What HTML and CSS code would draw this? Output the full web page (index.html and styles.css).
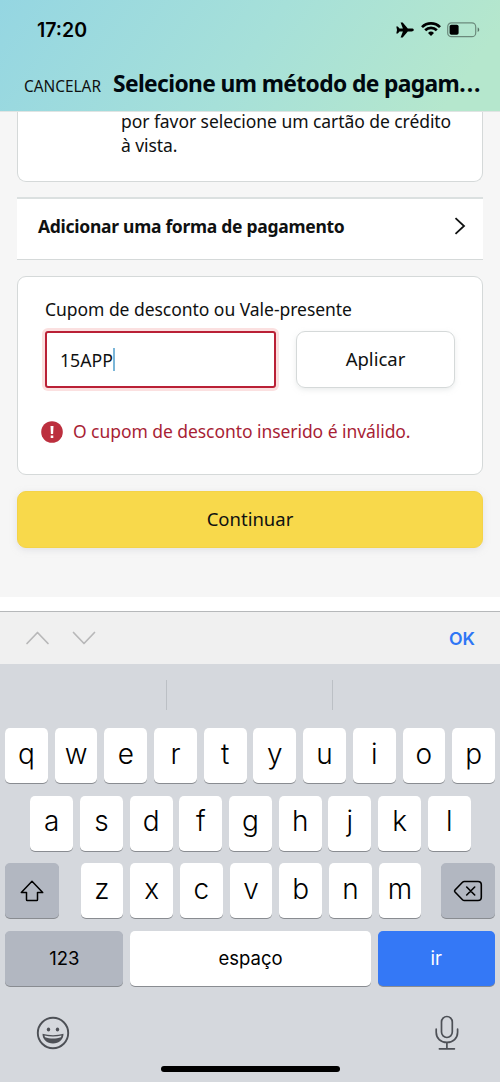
FILE: index.html
```html
<!DOCTYPE html>
<html lang="pt-BR">
<head>
<meta charset="utf-8">
<title>Selecione um método de pagamento</title>
<link rel="stylesheet" href="styles.css">
</head>
<body>
<div class="screen">
  <header class="header">
    <div class="status">
      <span class="clock">17:20</span>
      <div class="status-icons">
        <svg width="18" height="16" viewBox="0 0 18 16"><path d="M17.800 8c0-.9-1-1.400-2.200-1.400h-3.800L6.700.4H4.600l2.300 6.200H3.500L1.800 4.600H.3L1 8 .3 11.400h1.500l1.700-2h3.400L4.600 15.600h2.100l5.100-6.200h3.800c1.200 0 2.200-.5 2.200-1.400z"/></svg>
        <svg class="wifi" width="20" height="14" viewBox="0 0 20 14"><g fill="none" stroke="#000" stroke-width="2.700"><path d="M1 5.100a12.700 12.700 0 0 1 18 0"/><path d="M4.200 8.300a8.200 8.200 0 0 1 11.600 0"/></g><path d="M10 14l-3-3a4.300 4.300 0 0 1 6 0z"/></svg>
        <svg class="battery" width="33" height="16" viewBox="0 0 33 16"><rect x=".7" y=".9" width="28" height="13.800" rx="3.800" fill="none" stroke="#000" stroke-opacity=".4" stroke-width="1.200"/><rect x="2.600" y="2.800" width="9" height="10" rx="1.800"/><path d="M30.700 5.600c2 .7 2 3.700 0 4.400z" opacity=".5"/></svg>
      </div>
    </div>
    <div class="nav">
      <span class="cancel">CANCELAR</span>
      <h1 class="title">Selecione um método de pagam<span class="dots">...</span></h1>
    </div>
  </header>
  <main class="content">
    <section class="card notice"><p class="notice-text">por favor selecione um cartão de crédito<br>à vista.</p></section>
    <section class="add-row">
      <span class="add-label">Adicionar uma forma de pagamento</span>
      <svg width="12" height="18" viewBox="0 0 12 18"><path d="M1.500 1.200L10 9l-8.500 7.800" fill="none" stroke="#0f1111" stroke-width="1.800"/></svg>
    </section>
    <section class="card coupon">
      <div class="coupon-label">Cupom de desconto ou Vale-presente</div>
      <div class="coupon-form">
        <div class="field"><span>15APP</span><span class="caret"></span></div>
        <div class="apply">Aplicar</div>
      </div>
      <div class="error">
        <svg width="22" height="22" viewBox="0 0 22 22"><circle cx="11" cy="11" r="10.800" fill="#bc2f3e"/><path d="M9.500 5h3l-.4 8h-2.200zM9.700 14.600h2.600V17H9.700z" fill="#fff"/></svg>
        <span class="error-text">O cupom de desconto inserido é inválido.</span>
      </div>
    </section>
    <div class="continue">Continuar</div>
  </main>
  <div class="toolbar">
    <svg width="72" height="16" viewBox="0 0 72 16"><path d="M2 13.500L12.500 2.500l10.500 11M48.500 2.500l10.500 11L69.500 2.500" fill="none" stroke="#b8b8b9" stroke-width="1.700" stroke-linecap="round" stroke-linejoin="round"/></svg>
    <span class="ok">OK</span>
  </div>
  <div class="keyboard">
    <div class="suggestions"><span></span><span></span><span></span></div>
    <div class="keys">
      <div class="row"><b class="key">q</b><b class="key">w</b><b class="key">e</b><b class="key">r</b><b class="key">t</b><b class="key">y</b><b class="key">u</b><b class="key">i</b><b class="key">o</b><b class="key">p</b></div>
      <div class="row middle"><b class="key">a</b><b class="key">s</b><b class="key">d</b><b class="key">f</b><b class="key">g</b><b class="key">h</b><b class="key">j</b><b class="key">k</b><b class="key">l</b></div>
      <div class="row">
        <b class="key mod shift"><svg width="26" height="24" viewBox="0 0 26 24"><path d="M13 2.200L23.700 13.600H18.500v7.200q0 .8-.8.800H8.300q-.8 0-.8-.8v-7.200H2.300z" fill="none" stroke="#000" stroke-width="1.500" stroke-linejoin="round"/></svg></b>
        <b class="key">z</b><b class="key">x</b><b class="key">c</b><b class="key">v</b><b class="key">b</b><b class="key">n</b><b class="key">m</b>
        <b class="key mod del"><svg width="30" height="24" viewBox="0 0 30 24"><path d="M11.300 2.500H25q3.300 0 3.300 3.300v12.400q0 3.300-3.300 3.300H11.300q-1 0-1.800-.8L2 13q-.9-1 0-2l7.500-7.700q.8-.8 1.800-.8zM13.700 8l8 8M21.700 8l-8 8" fill="none" stroke="#000" stroke-width="1.600" stroke-linecap="round"/></svg></b>
      </div>
      <div class="row"><b class="key mod num">123</b><b class="key space">espaço</b><b class="key go">ir</b></div>
    </div>
    <div class="bottom">
      <svg width="34" height="34" viewBox="0 0 34 34"><circle cx="17" cy="17" r="15.200" fill="none" stroke="#4d5056" stroke-width="1.900"/><ellipse cx="12.500" cy="13.500" rx="1.700" ry="2.100" fill="#4d5056"/><ellipse cx="21.500" cy="13.500" rx="1.700" ry="2.100" fill="#4d5056"/><path d="M6.500 17.800c6 1.900 15 1.900 21 0C27.600 23.500 23 27.500 17 27.500S6.400 23.500 6.500 17.800z" fill="#4d5056"/><path d="M8.500 19.600c5.200 1.300 11.800 1.300 17 0-.1.600-.3 1.200-.6 1.700-4.700 1.700-11.100 1.700-15.800 0-.3-.5-.5-1.100-.6-1.700z" fill="#d5d8dd"/></svg>
      <svg width="24" height="36" viewBox="0 0 24 36"><g fill="none" stroke="#4d5056" stroke-width="1.700" stroke-linecap="round"><rect x="6.500" y="1.500" width="10.800" height="21" rx="5.400"/><path d="M1.200 14.200v3c0 6 4.500 10.200 10.700 10.200s10.700-4.200 10.700-10.200v-3M11.900 27.500v6M4.400 33.800h15"/></g></svg>
    </div>
    <div class="home"></div>
  </div>
</div>
</body>
</html>
```
FILE: styles.css
```css
* { box-sizing: border-box; }
body { margin: 0; font-family: "Noto Sans", sans-serif; color: #0f1111; }
.screen { width: 500px; height: 1082px; overflow: hidden; display: flex; flex-direction: column; background: #fff; }
.screen span, .screen h1, .notice-text { white-space: nowrap; }
svg { display: block; flex: none; }

.header { height: 111px; flex: none; background: linear-gradient(125deg, #95d6e2 0%, #a6e0d9 50%, #b5e7cd 90%); }
.status { height: 60px; display: flex; justify-content: space-between; padding: 0 20px 0 37px; }
.clock { font: 600 19.500px/60px Inter, sans-serif; color: #000; }
.status-icons { display: flex; align-items: center; gap: 7px; }
.wifi { margin-top: -2px; }
.battery { margin-left: -1px; }
.nav { display: flex; padding-left: 24px; }
.cancel { font-size: 15.400px; line-height: 54px; width: 89px; }
.title { margin: 0; font-size: 22.800px; line-height: 48px; font-weight: 700; letter-spacing: -.62px; color: #00080f; }
.dots { letter-spacing: 1px; }

.content { height: 486px; flex: none; background: #f6f6f6; padding: 0 17px; border-top: 1px solid #dfe4e3; }
.card { background: #fff; border: 1px solid #d5d9d9; border-radius: 9px; }
.notice { display: flow-root; height: 70px; border-top: 0; border-radius: 0 0 9px 9px; padding-left: 103px; }
.notice-text { margin: -3px 0 0; font-size: 17.500px; line-height: 24px; letter-spacing: -.06px; }
.add-row { height: 63px; margin-top: 15px; display: flex; align-items: center; justify-content: space-between; padding: 0 17px 6px 21px; background: #fff; border-top: 2px solid #dbe0e0; border-bottom: 1px solid #d5d9d9; }
.add-label { font-size: 17.500px; font-weight: 700; letter-spacing: -.28px; }
.coupon { height: 199px; margin-top: 16px; padding: 19px 27px 0; }
.coupon-label { font-size: 17.500px; line-height: 26px; letter-spacing: -.04px; }
.coupon-form { display: flex; justify-content: space-between; margin-top: 9px; }
.field { width: 231px; height: 57px; display: flex; align-items: center; padding-left: 13px; border: 2px solid #ba2036; border-radius: 3px; box-shadow: 0 0 0 3px #fbe0e0; font-size: 17.700px; }
.caret { width: 2px; height: 23px; background: #7bb6d8; }
.apply { width: 159px; height: 57px; text-align: center; font-size: 18.500px; line-height: 54px; border: 1px solid #d5d9d9; border-radius: 9px; box-shadow: 0 2px 5px rgba(213,217,217,.5); }
.error { display: flex; align-items: center; gap: 10px; margin: 31px 0 0 -4px; height: 26px; font-size: 17.500px; letter-spacing: -.06px; color: #a81e35; }
.error-text { padding-bottom: 2px; }
.continue { height: 57px; margin-top: 16px; text-align: center; font-size: 18.500px; line-height: 53px; background: #f8d94b; border: 1px solid #f4d348; border-radius: 9px; box-shadow: 0 2px 6px rgba(205,208,215,.5); }

.toolbar { height: 53px; margin-top: 14px; flex: none; display: flex; align-items: center; justify-content: space-between; padding: 0 25px; border-top: 1px solid #b6b8ba; background: #f0f0f0; }
.ok { font: 600 17.700px/30px Inter, sans-serif; padding-top: 2px; color: #2e76f5; }
.keyboard { height: 418px; flex: none; display: flex; flex-direction: column; background: #d5d8dd; font-family: Inter, sans-serif; color: #000; }
.suggestions { height: 30px; margin: 16px 1px 0 0; display: flex; }
.suggestions span { flex: 1; }
.suggestions span + span { border-left: 1px solid #bcc0c5; }
.keys { margin: 18px 5px 0; display: flex; flex-direction: column; gap: 12.700px; }
.row { display: flex; justify-content: center; gap: 6.900px; height: 55px; }
.middle { padding-left: 1px; }
.key { width: 42.800px; height: 55px; flex: none; display: flex; align-items: center; justify-content: center; padding-bottom: 4px; border-radius: 5px; background: #fff; font-size: 28px; font-weight: 300; box-shadow: 0 1px 0 #898c91; }
.mod { background: #b2b7c1; }
.shift, .del { width: 54px; padding-bottom: 0; }
.shift { margin-right: 14.600px; }
.del { margin-left: 12.600px; }
.num, .space, .go { font-size: 18.500px; font-weight: 400; padding-bottom: 2px; }
.num { width: 118px; }
.space { width: 240.500px; }
.go { width: 117px; background: #3478f6; color: #fff; }
.bottom { display: flex; justify-content: space-between; height: 36px; margin: 29px 41px 0 36px; align-items: center; }
.home { width: 179px; height: 6px; margin: 15px 0 0 161px; border-radius: 3px; background: #000; }
```
